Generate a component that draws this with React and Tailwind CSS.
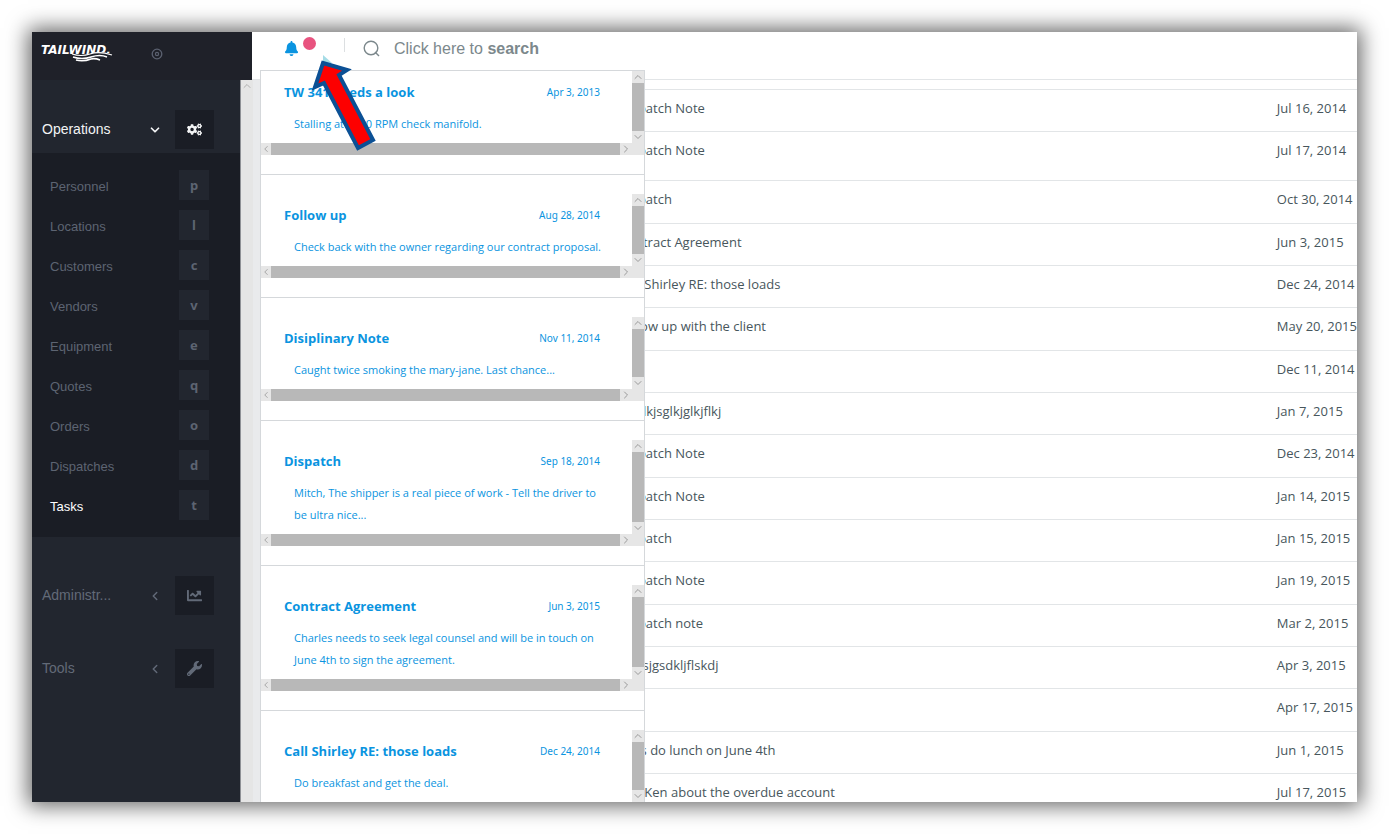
import React from "react";
import { FaBell, FaChartLine, FaCogs, FaWrench } from "react-icons/fa";
import { ChevronDown, ChevronLeft, ChevronRight, ChevronUp } from "lucide-react";

const operations = [
  { label: "Personnel", hotkey: "p" },
  { label: "Locations", hotkey: "l" },
  { label: "Customers", hotkey: "c" },
  { label: "Vendors", hotkey: "v" },
  { label: "Equipment", hotkey: "e" },
  { label: "Quotes", hotkey: "q" },
  { label: "Orders", hotkey: "o" },
  { label: "Dispatches", hotkey: "d" },
  { label: "Tasks", hotkey: "t", active: true },
];

const notifications = [
  { title: "TW 341 needs a look", date: "Apr 3, 2013", text: "Stalling at 1200 RPM check manifold." },
  { title: "Follow up", date: "Aug 28, 2014", text: "Check back with the owner regarding our contract proposal." },
  { title: "Disiplinary Note", date: "Nov 11, 2014", text: "Caught twice smoking the mary-jane. Last chance..." },
  { title: "Dispatch", date: "Sep 18, 2014", text: "Mitch, The shipper is a real piece of work - Tell the driver to be ultra nice..." },
  { title: "Contract Agreement", date: "Jun 3, 2015", text: "Charles needs to seek legal counsel and will be in touch on June 4th to sign the agreement." },
  { title: "Call Shirley RE: those loads", date: "Dec 24, 2014", text: "Do breakfast and get the deal." },
];

const tasks = [
  { title: "Dispatch Note", date: "Jul 16, 2014" },
  { title: "Dispatch Note", date: "Jul 17, 2014", tall: true },
  { title: "Dispatch", date: "Oct 30, 2014" },
  { title: "Contract Agreement", date: "Jun 3, 2015" },
  { title: "Call Shirley RE: those loads", date: "Dec 24, 2014" },
  { title: "Follow up with the client", date: "May 20, 2015" },
  { title: "", date: "Dec 11, 2014" },
  { title: "flkjslkjsglkjglkjflkj", date: "Jan 7, 2015" },
  { title: "Dispatch Note", date: "Dec 23, 2014" },
  { title: "Dispatch Note", date: "Jan 14, 2015" },
  { title: "Dispatch", date: "Jan 15, 2015" },
  { title: "Dispatch Note", date: "Jan 19, 2015" },
  { title: "Dispatch note", date: "Mar 2, 2015" },
  { title: "lkjlksjgsdkljflskdj", date: "Apr 3, 2015" },
  { title: "", date: "Apr 17, 2015" },
  { title: "Let's do lunch on June 4th", date: "Jun 1, 2015" },
  { title: "Call Ken about the overdue account", date: "Jul 17, 2015" },
];

function Logo() {
  return (
    <a href="#" aria-label="Tailwind home" className="relative block text-white">
      <span className="block font-['DejaVu_Sans',sans-serif] text-xs leading-4 font-bold italic">TAILWIND.</span>
      <svg className="absolute top-2 left-7 h-3 w-11" viewBox="0 0 44 12" fill="none">
        <path d="M8 5 Q16 6 24 4 T44 5" stroke="#1f2129" strokeWidth="2" />
        <path d="M3 4 Q12 7 21 4 T43 5" stroke="white" strokeWidth="1.2" />
        <path d="M4 7 Q13 10 22 7 T38 7" stroke="white" strokeWidth="1.4" />
        <path d="M7 10 Q14 12 22 9 Q26 8 31 10" stroke="white" strokeWidth="1.6" />
      </svg>
    </a>
  );
}

function NavGroup({ label, icon: Icon, open }) {
  return (
    <button
      className={`flex w-full items-center pt-[30px] pr-[26px] pb-1 pl-[10px] text-left text-sm ${
        open ? "text-[#f3f4f5]" : "text-[#626a78]"
      }`}
    >
      <span className="flex-1 pb-[2px]">{label}</span>
      <span className="mr-[13px]">
        {open ? <ChevronDown size={14} strokeWidth={3} /> : <ChevronLeft size={14} strokeWidth={2.5} />}
      </span>
      <span className="flex size-[39px] items-center justify-center bg-[#1a1d25]">
        <Icon size={15} />
      </span>
    </button>
  );
}

function Sidebar() {
  return (
    <nav className="w-[208px] shrink-0 overflow-hidden bg-[#22262f] font-['Liberation_Sans',sans-serif]">
      <NavGroup label="Operations" icon={FaCogs} open />
      <ul className="mb-[9px] bg-[#1a1d25] py-3">
        {operations.map((item) => (
          <li key={item.label}>
            <a
              href="#"
              className={`flex h-10 items-center justify-between pr-[31px] pl-[18px] text-[13px] ${
                item.active ? "text-white" : "text-[#5d6472]"
              }`}
            >
              <span className="pt-1">{item.label}</span>
              <kbd className="flex size-[30px] items-center justify-center bg-[#22262f] pt-[2px] font-['Noto_Sans',sans-serif] text-[13px] font-bold text-[#5d6472]">
                {item.hotkey}
              </kbd>
            </a>
          </li>
        ))}
      </ul>
      <NavGroup label="Administr..." icon={FaChartLine} />
      <NavGroup label="Tools" icon={FaWrench} />
    </nav>
  );
}

function NotificationItem({ item }) {
  return (
    <li className="border-b border-[#d5d8db] py-[19px] first:pt-0">
      <div className="grid grid-cols-[1fr_12px]">
        <div className="pt-[10px] pr-6 pb-2 pl-[23px]">
          <div className="flex items-center justify-between pr-2">
            <h3 className="text-[13px] leading-[22px] font-bold">{item.title}</h3>
            <time className="font-['Noto_Sans',sans-serif] text-[10px]">{item.date}</time>
          </div>
          <p className="mt-[10px] pl-[10px] text-[11px] leading-[22px]">{item.text}</p>
        </div>
        <div className="flex flex-col items-center bg-[#e6e6e6] text-[#9a9a9a]">
          <ChevronUp size={12} />
          <div className="w-full flex-1 bg-[#b8b8b8]"></div>
          <ChevronDown size={12} />
        </div>
        <div className="flex h-3 items-center bg-[#e6e6e6] text-[#9a9a9a]">
          <ChevronLeft size={10} />
          <div className="h-full flex-1 bg-[#b8b8b8]"></div>
          <ChevronRight size={12} />
        </div>
        <div className="bg-[#e6e6e6]"></div>
      </div>
    </li>
  );
}

function TaskTable() {
  return (
    <table className="w-full border-t border-[#e2e5e7] text-[13px] text-[#47565c]">
      <tbody className="[&>tr:nth-child(3n)]:h-[43px]">
        {tasks.map((task, i) => (
          <tr key={i} className={`border-b border-[#e2e5e7] align-top ${task.tall ? "h-[49px]" : "h-[42px]"}`}>
            <td className="pt-[10px] pl-[359px] leading-4">{task.title}</td>
            <td className="w-20 pt-[10px] leading-4 whitespace-nowrap">{task.date}</td>
          </tr>
        ))}
      </tbody>
    </table>
  );
}

function TopBar() {
  return (
    <header className="flex h-12 shrink-0">
      <div className="flex w-[220px] items-start bg-[#1f2129] pt-[10px] pl-[9px]">
        <Logo />
        <button className="mt-[6px] ml-10 text-[#5b6170]" aria-label="Toggle menu">
          <svg className="size-3" viewBox="0 0 12 12" fill="none" stroke="currentColor">
            <circle cx="6" cy="6" r="4.8" strokeWidth="1.3" />
            <circle cx="6" cy="6" r="1.6" strokeWidth="1.2" />
          </svg>
        </button>
      </div>
      <div className="flex flex-1 items-start border-b border-[#e2e5e7] pt-[5px] pl-8 font-['Liberation_Sans',sans-serif]">
        <button className="flex w-[60px] gap-1 text-[#0a94e0]" aria-label="Notifications">
          <FaBell size={15} className="mt-1" />
          <span className="size-[13px] rounded-full bg-[#e8537f]"></span>
        </button>
        <span className="mt-px h-[14px] w-px bg-[#dcdfe1]"></span>
        <button className="ml-[18px] flex items-center gap-[13px] text-[#7c888c]">
          <svg className="size-[18px]" viewBox="0 0 18 18" fill="none" stroke="currentColor" strokeWidth="1.4">
            <circle cx="8" cy="8" r="6.8" />
            <path d="M12 12 L16 16" />
          </svg>
          <span className="text-base leading-6">
            Click here to <strong>search</strong>
          </span>
        </button>
      </div>
    </header>
  );
}

// Callout arrow pointing at the notification bell
function CalloutArrow() {
  return (
    <svg className="absolute top-[22px] left-[276px] h-[100px] w-[72px]" viewBox="0 0 72 100">
      <path d="M15 1 L24 9 L15 9 Z" fill="#a5dce6" />
      <path
        d="M15 9 L39 16 L31 21 L65 86 L50 94 L16 29 L7 33 Z"
        fill="#fd0000"
        stroke="#0b5095"
        strokeWidth="4"
      />
    </svg>
  );
}

export default function App() {
  return (
    <div className="h-screen bg-white p-8 font-['Open_Sans',sans-serif]">
      <div className="relative flex h-full flex-col overflow-hidden bg-white shadow-[0_0_20px_4px_rgba(0,0,0,0.6)]">
        <TopBar />
        <div className="flex min-h-0 flex-1">
          <Sidebar />
          <div className="w-[13px] shrink-0 border-l border-[#8e9095] bg-[#e5e5e5] text-[#b0b0b0]">
            <ChevronUp size={12} />
          </div>
          <main className="min-w-0 flex-1 overflow-hidden bg-[#e9eaec] pl-[7px]">
            <div className="bg-white pt-[9px]">
              <TaskTable />
            </div>
          </main>
        </div>
        <ul className="absolute top-[38px] left-[228px] w-[385px] border border-[#d5d8db] bg-white text-[#0a94e0]">
          {notifications.map((item) => (
            <NotificationItem key={item.title} item={item} />
          ))}
        </ul>
        <CalloutArrow />
      </div>
    </div>
  );
}
